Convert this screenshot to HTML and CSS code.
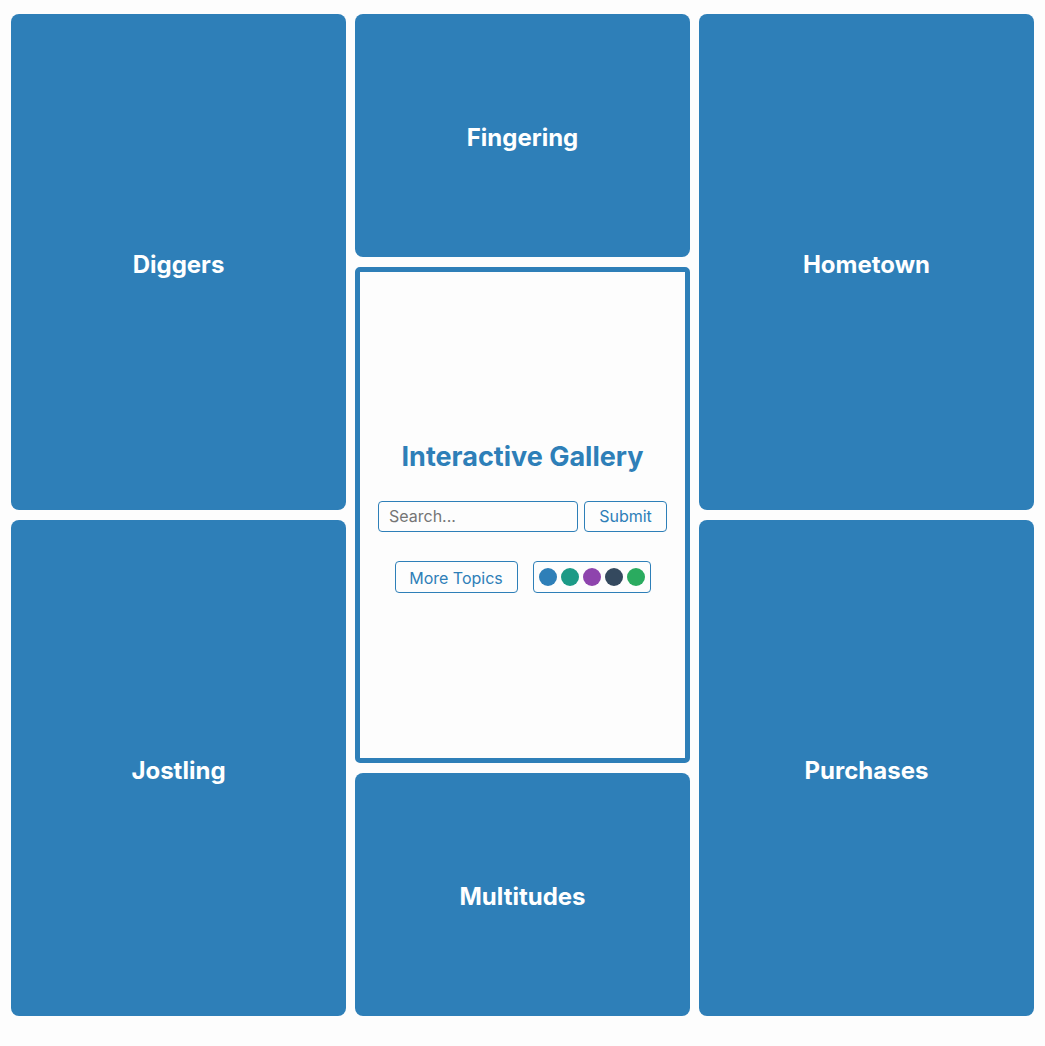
FILE: index.html
```html
<!DOCTYPE html>
<html lang="en">
<head>
<meta charset="utf-8">
<title>Interactive Gallery</title>
<link rel="stylesheet" href="styles.css">
</head>
<body>
<div class="grid">
  <div class="tile tall c1 r1">Diggers</div>
  <div class="tile c2 r1s">Fingering</div>
  <div class="tile tall c3 r1">Hometown</div>
  <div class="center c2 r2">
    <h1 class="title">Interactive Gallery</h1>
    <div class="search-row">
      <input class="search" type="text" placeholder="Search...">
      <button class="btn submit">Submit</button>
    </div>
    <div class="extra-row">
      <button class="btn more">More Topics</button>
      <div class="dots">
        <span class="dot d1"></span>
        <span class="dot d2"></span>
        <span class="dot d3"></span>
        <span class="dot d4"></span>
        <span class="dot d5"></span>
      </div>
    </div>
  </div>
  <div class="tile tall c1 r3">Jostling</div>
  <div class="tile tall c3 r3">Purchases</div>
  <div class="tile c2 r4">Multitudes</div>
</div>
</body>
</html>
```

FILE: styles.css
```css
html, body {
  margin: 0;
  padding: 0;
  background: #fdfdfd;
  font-family: Inter, "Noto Sans", sans-serif;
}

.grid {
  display: grid;
  grid-template-columns: repeat(3, 335px);
  grid-template-rows: repeat(4, 243px);
  column-gap: 9px;
  row-gap: 10px;
  padding: 14px 11px 30px 11px;
}

.tile {
  box-sizing: border-box;
  background: #2e7fb8;
  color: #ffffff;
  border-radius: 8px;
  display: flex;
  align-items: center;
  justify-content: center;
  font-size: 24px;
  font-weight: 700;
  padding-top: 4px;
}

.c1 { grid-column: 1; }
.c2 { grid-column: 2; }
.c3 { grid-column: 3; }
.r1 { grid-row: 1 / span 2; }
.r1s { grid-row: 1; }
.r2 { grid-row: 2 / span 2; }
.r3 { grid-row: 3 / span 2; }
.r4 { grid-row: 4; }

.center {
  border: 5px solid #2e7fb8;
  border-radius: 5px;
  background: #fdfdfd;
  display: flex;
  flex-direction: column;
  align-items: center;
  justify-content: center;
}

.title {
  margin: 2px 0 27px 0;
  font-size: 27px;
  font-weight: 700;
  line-height: 34px;
  color: #2e7fb8;
}

.search-row {
  display: flex;
  gap: 6px;
  margin-bottom: 29px;
}

.search {
  box-sizing: border-box;
  width: 200px;
  height: 31px;
  border: 1px solid #2e7fb8;
  border-radius: 4px;
  padding: 0 10px;
  font-family: Inter, "Noto Sans", sans-serif;
  font-size: 16px;
  color: #333;
  background: #fdfdfd;
  outline: none;
}

.search::placeholder {
  color: #757575;
}

.btn {
  box-sizing: border-box;
  height: 31px;
  border: 1px solid #2e7fb8;
  border-radius: 4px;
  background: #fdfdfd;
  color: #2e7fb8;
  font-family: Inter, "Noto Sans", sans-serif;
  font-size: 16px;
  padding: 0;
  white-space: nowrap;
  cursor: pointer;
}

.submit {
  width: 83px;
}

.more {
  width: 123px;
  height: 32px;
  padding-top: 3px;
}

.extra-row {
  display: flex;
  gap: 15px;
}

.dots {
  box-sizing: border-box;
  height: 32px;
  width: 118px;
  border: 1px solid #2e7fb8;
  border-radius: 4px;
  padding: 1px 5px 0 5px;
  display: flex;
  align-items: center;
  gap: 4px;
}

.dot {
  width: 18px;
  height: 18px;
  border-radius: 50%;
  display: block;
}

.d1 { background: #2e7fb8; }
.d2 { background: #1c9a86; }
.d3 { background: #8e44ad; }
.d4 { background: #34495e; }
.d5 { background: #2aab5f; }
```
